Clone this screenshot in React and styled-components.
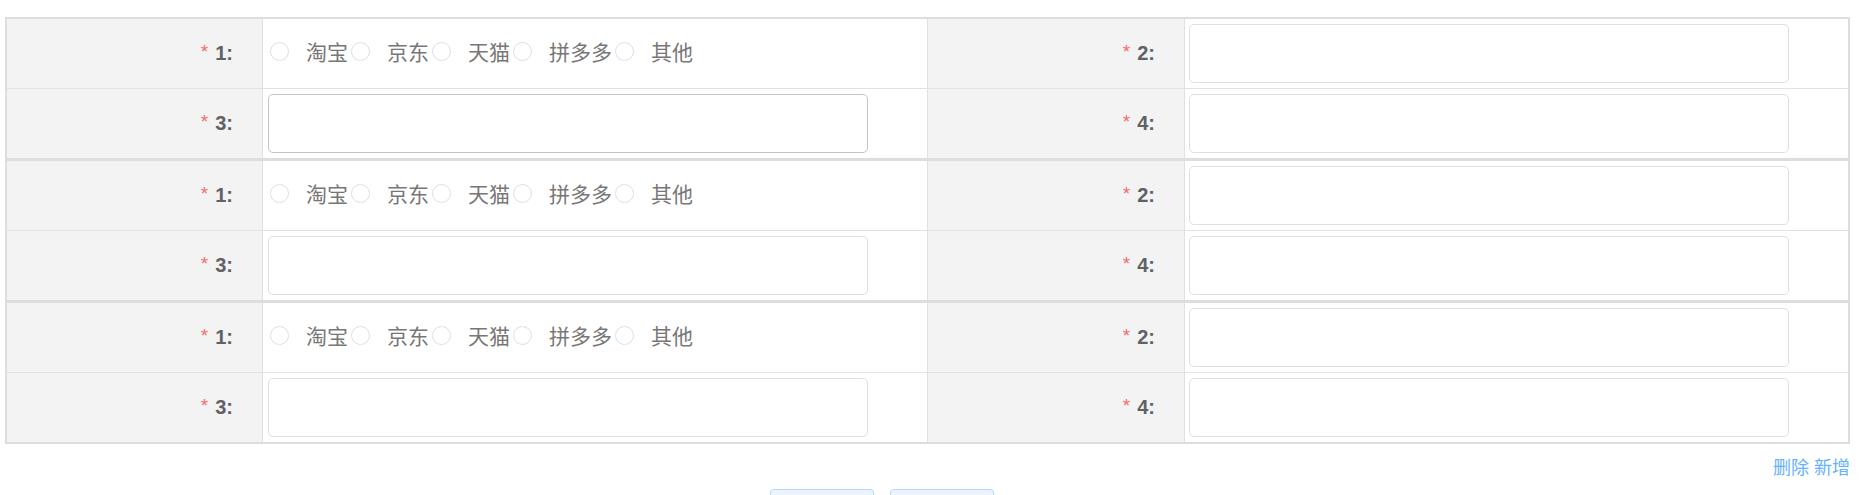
import styled, { createGlobalStyle } from "styled-components";

const GlobalStyle = createGlobalStyle`
  body {
    margin: 0;
    background: #fff;
    font-family: "Liberation Sans", "Noto Sans CJK SC", sans-serif;
  }
  * {
    box-sizing: border-box;
  }
`;

const Page = styled.div`
  padding: 17px 17px 0 5px;
`;

const Table = styled.div`
  border: 2px solid #dddddd;
`;

const Group = styled.div`
  & + & {
    border-top: 3px solid #dddddd;
  }
`;

const Row = styled.div`
  display: grid;
  grid-template-columns: 256px 665px 257px 1fr;
  height: 69px;

  & + & {
    height: 70px;
    border-top: 1px solid #e2e2e2;
  }
`;

const LabelCell = styled.div`
  display: flex;
  align-items: center;
  justify-content: flex-end;
  padding-right: 29px;
  background: #f3f3f3;
  border-right: 1px solid #e0e0e0;
  font-size: 20px;
  font-weight: bold;
  color: #5f6166;
`;

const Star = styled.span`
  color: #f56c6c;
  font-size: 19px;
  font-weight: normal;
  margin-right: 7px;
  position: relative;
  top: -2px;
`;

const ContentCell = styled.div`
  display: flex;
  align-items: center;
  padding-left: ${(props) => (props.$last ? "4px" : "5px")};
  border-right: ${(props) => (props.$last ? "none" : "1px solid #e0e0e0")};
`;

const Input = styled.input`
  width: 600px;
  height: 59px;
  border: 1px solid ${(props) => (props.$hover ? "#c0c4cc" : "#dcdfe6")};
  border-radius: 5px;
  background: #fff;
  outline: none;
  padding: 0 14px;
  font-size: 18px;
`;

const RadioGroup = styled.div`
  display: flex;
  align-items: center;
  margin-top: -5px;
  padding-left: 2px;
`;

const Radio = styled.label`
  display: flex;
  align-items: center;
  margin-right: 3px;
  cursor: pointer;
`;

const Circle = styled.span`
  width: 19px;
  height: 19px;
  border: 1px solid #dcdfe6;
  border-radius: 50%;
  background: #fff;
`;

const RadioText = styled.span`
  padding-left: 17px;
  font-family: "Noto Sans CJK SC", sans-serif;
  font-size: 21px;
  color: #777;
  line-height: 1;
`;

const Actions = styled.div`
  display: flex;
  justify-content: flex-end;
  gap: 5px;
  margin-top: 10px;
  line-height: 25px;
`;

const LinkText = styled.a`
  font-family: "Noto Sans CJK SC", sans-serif;
  font-size: 18px;
  color: #66b1ff;
  cursor: pointer;
`;

const Footer = styled.div`
  display: flex;
  justify-content: center;
  gap: 16px;
  padding-right: 92px;
  margin-top: 10px;
`;

const Button = styled.button`
  width: 104px;
  height: 40px;
  background: #ecf5ff;
  border: 1px solid #b3d8ff;
  border-radius: 4px;
`;

const shops = ["淘宝", "京东", "天猫", "拼多多", "其他"];

const Label = ({ n }) => (
  <LabelCell>
    <Star>*</Star>
    {n}:
  </LabelCell>
);

const FormGroup = ({ hover }) => (
  <Group>
    <Row>
      <Label n={1} />
      <ContentCell>
        <RadioGroup>
          {shops.map((s) => (
            <Radio key={s}>
              <Circle />
              <RadioText>{s}</RadioText>
            </Radio>
          ))}
        </RadioGroup>
      </ContentCell>
      <Label n={2} />
      <ContentCell $last>
        <Input />
      </ContentCell>
    </Row>
    <Row>
      <Label n={3} />
      <ContentCell>
        <Input $hover={hover} />
      </ContentCell>
      <Label n={4} />
      <ContentCell $last>
        <Input />
      </ContentCell>
    </Row>
  </Group>
);

const App = () => {
  return (
    <>
      <GlobalStyle />
      <Page>
        <Table>
          <FormGroup hover />
          <FormGroup />
          <FormGroup />
        </Table>
        <Actions>
          <LinkText>删除</LinkText>
          <LinkText>新增</LinkText>
        </Actions>
        <Footer>
          <Button aria-label="confirm" />
          <Button aria-label="cancel" />
        </Footer>
      </Page>
    </>
  );
};

export default App;
